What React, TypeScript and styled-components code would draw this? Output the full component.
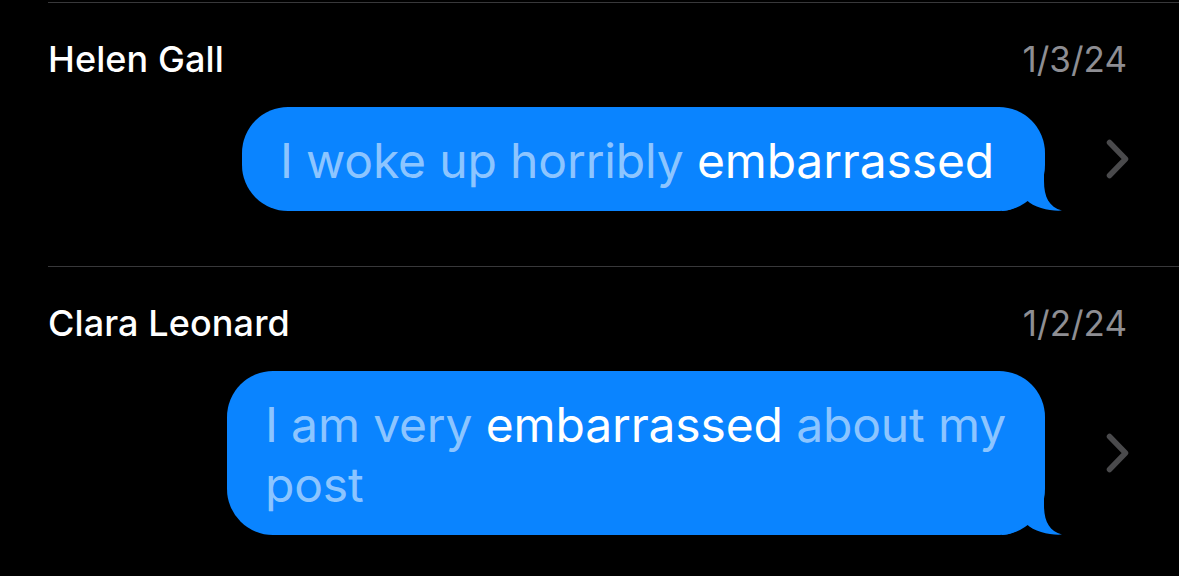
import React from "react";
import styled, { createGlobalStyle } from "styled-components";

const GlobalStyle = createGlobalStyle`
  html, body { margin: 0; padding: 0; background: #000; }
  body { font-family: Inter, "Noto Sans", "Liberation Sans", sans-serif; -webkit-font-smoothing: antialiased; }
`;

const Page = styled.div`
  width: 1179px;
  height: 576px;
  overflow: hidden;
  background: #000;
  padding-top: 2px;
  padding-left: 48px;
  box-sizing: border-box;
`;

const Result = styled.section`
  border-top: 1px solid #38383a;
  padding: 35px 0 55px 0;
  display: flex;
  flex-direction: column;
`;

const Header = styled.div`
  display: flex;
  justify-content: space-between;
  align-items: baseline;
  padding-right: 52px;
  font-size: 36px;
  line-height: 42px;
`;

const Name = styled.span`
  color: #fff;
  font-weight: 500;
  letter-spacing: 0.1px;
`;

const Date = styled.span`
  color: #8e8e93;
  font-weight: 400;
  font-size: 35px;
`;

const BubbleRow = styled.div`
  display: flex;
  justify-content: flex-end;
  align-items: center;
  margin-top: 27px;
  padding-right: 49px;
`;

const Bubble = styled.div`
  position: relative;
  max-width: 830px;
  box-sizing: border-box;
  background: #0a84ff;
  border-radius: 46px;
  padding: 24px 39px 20px 38px;
  font-size: 48px;
  line-height: 60px;
  letter-spacing: -0.15px;
  color: rgba(255, 255, 255, 0.55);
`;

const Match = styled.span`
  color: #fff;
`;

const Tail = styled.svg`
  position: absolute;
  right: -17px;
  bottom: 0;
  width: 60px;
  height: 40px;
  overflow: visible;
`;

const Chevron = styled.svg`
  flex: none;
  width: 24px;
  height: 40px;
  margin-left: 61px;
`;

type Part = { text: string; hit?: boolean; br?: boolean };

const Message: React.FC<{ parts: Part[]; padRight?: number }> = ({ parts, padRight }) => (
  <BubbleRow>
    <Bubble style={padRight !== undefined ? { paddingRight: padRight } : undefined}>
      {parts.map((p, i) =>
        p.br ? (
          <br key={i} />
        ) : p.hit ? (
          <Match key={i}>{p.text}</Match>
        ) : (
          <React.Fragment key={i}>{p.text}</React.Fragment>
        )
      )}
      <Tail viewBox="0 0 60 40">
        <path
          d="M42 0 L42 10 C42 26 47 36 60 39.5 C50 40.5 32 37 24.5 29 C18 35 10 39 0 40 L0 0 Z"
          fill="#0a84ff"
        />
      </Tail>
    </Bubble>
    <Chevron viewBox="0 0 24 40">
      <path d="M3.5 3.5 L19.5 20 L3.5 36.5" fill="none" stroke="#4a4a4c" strokeWidth="5.5" strokeLinecap="round" strokeLinejoin="round" />
    </Chevron>
  </BubbleRow>
);

const items: { name: string; date: string; parts: Part[]; padRight?: number }[] = [
  {
    name: "Helen Gall",
    date: "1/3/24",
    parts: [{ text: "I woke up horribly " }, { text: "embarrassed", hit: true }],
    padRight: 51,
  },
  {
    name: "Clara Leonard",
    date: "1/2/24",
    parts: [
      { text: "I am very " },
      { text: "embarrassed", hit: true },
      { text: " about my" },
      { text: "", br: true },
      { text: "post" },
    ],
  },
];

export default function App() {
  return (
    <>
      <GlobalStyle />
      <Page>
        {items.map((it) => (
          <Result key={it.name}>
            <Header>
              <Name>{it.name}</Name>
              <Date>{it.date}</Date>
            </Header>
            <Message parts={it.parts} padRight={it.padRight} />
          </Result>
        ))}
      </Page>
    </>
  );
}
